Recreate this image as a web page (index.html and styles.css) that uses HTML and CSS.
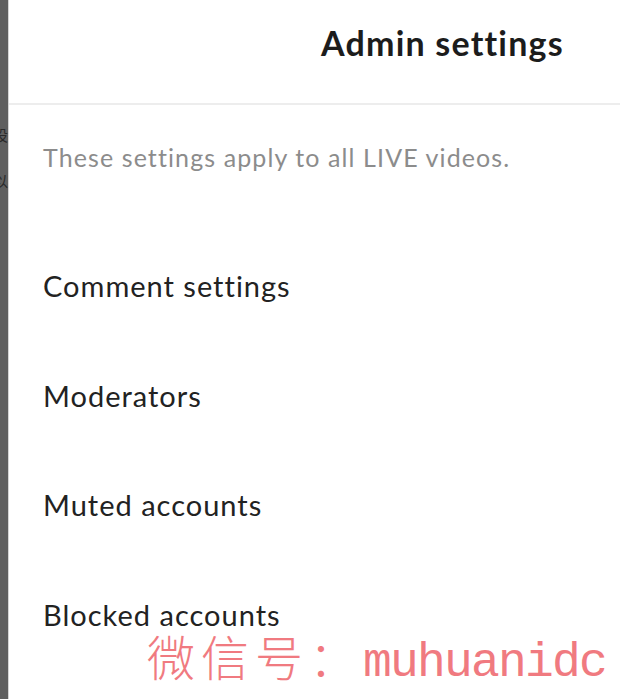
FILE: index.html
```html
<!DOCTYPE html>
<html lang="en">
<head>
<meta charset="utf-8">
<title>Admin settings</title>
<link rel="stylesheet" href="styles.css">
</head>
<body>
<div class="frame">
  <div class="edge">
    <div class="edge-text">设<br>以</div>
  </div>
  <div class="panel">
    <header class="header">
      <h1 class="title">Admin settings</h1>
    </header>
    <p class="intro">These settings apply to all LIVE videos.</p>
    <ul class="list">
      <li class="item">Comment settings</li>
      <li class="item">Moderators</li>
      <li class="item">Muted accounts</li>
      <li class="item">Blocked accounts</li>
    </ul>
  </div>
  <div class="watermark"><span class="wm-cjk">微信号：</span><span class="wm-latin">muhuanidc</span></div>
</div>
</body>
</html>
```

FILE: styles.css
```css
html, body {
  margin: 0;
  padding: 0;
  background: #ffffff;
}
body {
  width: 620px;
  height: 699px;
  overflow: hidden;
  font-family: "Lato", "Noto Sans", sans-serif;
  color: #222222;
}
.frame {
  position: relative;
  display: flex;
  height: 699px;
  overflow: hidden;
}
.edge {
  width: 8px;
  flex: none;
  background: #5f5f5f;
  border-right: 1px solid #d4d4d4;
  overflow: hidden;
}
.edge-text {
  margin-left: -7px;
  padding-top: 112px;
  font-family: "Noto Sans CJK SC", sans-serif;
  font-size: 15px;
  line-height: 46px;
  color: #2a2a2a;
}
.panel {
  flex: 1;
  display: flex;
  flex-direction: column;
  min-height: 0;
}
.panel > * {
  flex: none;
}
.header {
  height: 105px;
  box-sizing: border-box;
  border-bottom: 2px solid #ededed;
  padding: 23px 0 0 312px;
}
.title {
  margin: 0;
  font-size: 34px;
  line-height: 40px;
  font-weight: 700;
  letter-spacing: 1.2px;
  color: #1c1c1c;
  white-space: nowrap;
}
.intro {
  margin: 0;
  padding: 37px 0 0 34px;
  font-size: 25px;
  line-height: 30px;
  letter-spacing: 1.1px;
  color: #8c8c8c;
  white-space: nowrap;
}
.list {
  list-style: none;
  margin: 0;
  padding: 97px 0 0 34px;
}
.item {
  height: 109.5px;
  font-size: 29px;
  line-height: 34px;
  letter-spacing: 1px;
  color: #222222;
  white-space: nowrap;
}
.watermark {
  position: absolute;
  left: 147px;
  top: 627px;
  color: #f07a80;
  line-height: 56px;
  white-space: nowrap;
}
.wm-cjk {
  font-family: "Noto Sans CJK SC", sans-serif;
  font-weight: 300;
  font-size: 48px;
  letter-spacing: 6px;
}
.wm-latin {
  font-family: "Liberation Mono", monospace;
  font-size: 48px;
  letter-spacing: -1.8px;
}
```
